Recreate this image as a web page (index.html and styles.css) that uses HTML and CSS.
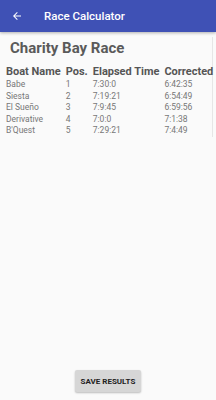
FILE: index.html
```html
<!DOCTYPE html>
<html lang="en">
<head>
    <meta charset="UTF-8">
    <meta name="viewport" content="width=device-width, initial-scale=1.0">
    <title>Race Calculator</title>
    <link rel="stylesheet" href="styles.css">
</head>
<body>
    <div class="app-bar">
        <svg class="back" width="12" height="12" viewBox="0 0 24 24">
            <path d="M20 11H7.83l5.59-5.59L12 4l-8 8 8 8 1.41-1.41L7.83 13H20v-2z" fill="#fff"/>
        </svg>
        <span class="title">Race Calculator</span>
    </div>

    <div class="content">
        <div class="results">
            <h1>Charity Bay Race</h1>
            <table>
                <tr>
                    <th class="c-name">Boat Name</th>
                    <th class="c-pos">Pos.</th>
                    <th class="c-time">Elapsed Time</th>
                    <th class="c-corr">Corrected</th>
                </tr>
                <tr><td>Babe</td><td>1</td><td>7:30:0</td><td>6:42:35</td></tr>
                <tr><td>Siesta</td><td>2</td><td>7:19:21</td><td>6:54:49</td></tr>
                <tr><td>El Sueño</td><td>3</td><td>7:9:45</td><td>6:59:56</td></tr>
                <tr><td>Derivative</td><td>4</td><td>7:0:0</td><td>7:1:38</td></tr>
                <tr><td>B'Quest</td><td>5</td><td>7:29:21</td><td>7:4:49</td></tr>
            </table>
        </div>

        <button class="btn">SAVE RESULTS</button>
    </div>
</body>
</html>
```

FILE: styles.css
```css
body {
    margin: 0;
    font-family: Roboto, "Liberation Sans", sans-serif;
    background: #fafafa;
    width: 216px;
    height: 400px;
    display: flex;
    flex-direction: column;
}
.app-bar {
    height: 32px;
    background: #3f51b5;
    display: flex;
    align-items: center;
    padding-left: 11px;
    box-shadow: 0 1px 3px rgba(0, 0, 0, 0.3);
}
.back {
    margin-right: 21px;
}
.title {
    color: white;
    font-size: 11.5px;
    font-weight: 500;
}
.content {
    flex: 1;
    display: flex;
    flex-direction: column;
    align-items: center;
    padding: 5px 0 8px 0;
}
.results {
    align-self: stretch;
    margin-right: 3px;
    border-right: 1px solid #e6e6e6;
    height: 100px;
}
h1 {
    margin: 0 0 0 10px;
    font-size: 15px;
    font-weight: bold;
    color: #5a5a5a;
    line-height: 22px;
}
table {
    border-collapse: collapse;
    margin: 5px 0 0 5px;
}
th {
    font-size: 11px;
    font-weight: bold;
    color: #555;
    text-align: left;
    padding: 0 4px 0 1px;
    line-height: 15px;
    white-space: nowrap;
}
td {
    font-size: 8.5px;
    color: #777;
    padding: 0 0 0 1px;
    line-height: 11.5px;
}
.c-name { width: 53px; }
.c-pos { width: 24px; }
.c-time { width: 66px; }
.btn {
    margin-top: auto;
    height: 22px;
    padding: 0 6px;
    font-family: Roboto, "Liberation Sans", sans-serif;
    font-size: 8px;
    font-weight: bold;
    color: #222;
    background: #d6d6d6;
    border: none;
    border-radius: 2px;
    box-shadow: 0 1px 2px rgba(0, 0, 0, 0.25);
}
```
